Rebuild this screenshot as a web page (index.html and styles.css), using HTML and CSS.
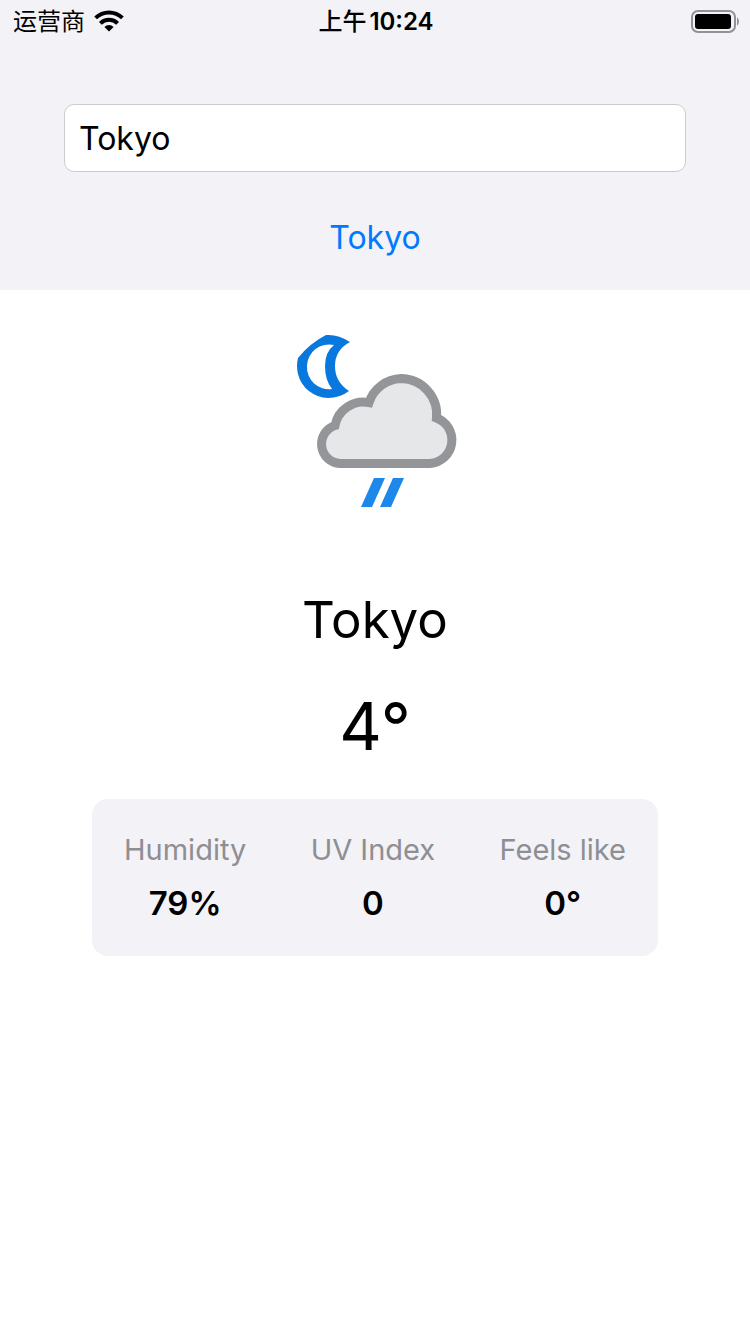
FILE: index.html
```
<!DOCTYPE html>
<html lang="en">
<head>
<meta charset="utf-8">
<meta name="viewport" content="width=device-width, initial-scale=1">
<title>Weather</title>
<link rel="stylesheet" href="styles.css">
</head>
<body>
<header class="top">
  <div class="status">
    <div class="status-left">
      <span class="carrier">运营商</span>
      <svg class="wifi" viewBox="0 0 30 22" aria-hidden="true">
        <path d="M15 21.5l-4.6-4.6a6.8 6.8 0 0 1 9.2 0z"/>
        <path class="arc" d="M6.4 13.4a12.2 12.2 0 0 1 17.2 0M1.6 7.9a19.2 19.2 0 0 1 26.8 0"/>
      </svg>
    </div>
    <div class="time"><span class="period">上午</span><span>10:24</span></div>
    <div class="status-right">
      <svg class="battery" viewBox="0 0 48 23" aria-hidden="true">
        <rect class="shell" x="1" y="1" width="43" height="21" rx="6"/>
        <rect x="4" y="4" width="36" height="15" rx="3"/>
        <path class="cap" d="M46 7.5c2.6 1 2.6 7 0 8z"/>
      </svg>
    </div>
  </div>
  <form class="search">
    <input class="field" type="text" value="Tokyo" aria-label="City">
    <button class="result" type="button">Tokyo</button>
  </form>
</header>
<main class="weather">
  <svg class="condition" viewBox="-5 0 200 200" role="img" aria-label="Night rain">
    <path class="moon" d="M70 22Q58 14 46 15Q30 23 18 38Q16 46 18 54A31.5 31.5 0 0 0 48 78Q60 78 69 71Q55 62 55 46T70 22ZM54 25A22 22 0 0 0 27 46A22 22 0 0 0 52 69Q45 60 45 46T54 25Z"/>
    <path class="cloud" d="M60 143.5A19.5 19.5 0 0 1 55 105.500A29 29 0 0 1 89 82.500A35 35 0 0 1 121 58.500A36 36 0 0 1 156.500 98A23.500 23.500 0 0 1 150 143.500Z"/>
    <path class="rain" d="M94 158h11l-13 29h-11zM113 158h11l-13 29h-11z"/>
  </svg>
  <h1 class="city">Tokyo</h1>
  <p class="temp">4°</p>
  <dl class="stats">
    <div class="stat"><dt>Humidity</dt><dd>79%</dd></div>
    <div class="stat"><dt>UV Index</dt><dd>0</dd></div>
    <div class="stat"><dt>Feels like</dt><dd>0°</dd></div>
  </dl>
</main>
</body>
</html>
```
FILE: styles.css
```
* { box-sizing: border-box; margin: 0; }
body { background: #fff; color: #000; font-family: Inter, "Noto Sans CJK SC", sans-serif; }
.top { background: #f2f2f7; padding-bottom: 31px; }
.status { display: grid; grid-template-columns: 1fr auto 1fr; align-items: center; height: 40px; padding: 0 11px 0 13px; font-size: 24px; line-height: 40px; }
.status-left { display: flex; align-items: center; gap: 9px; }
.status-right { display: flex; justify-content: flex-end; }
.time { display: flex; gap: 3px; padding-top: 2px; font-weight: 600; }
.period { font-weight: 500; }
.carrier { padding-top: 2px; font-size: 24px; }
.wifi { width: 30px; height: 22px; }
.arc { fill: none; stroke: #000; stroke-width: 4; }
.battery { width: 48px; height: 23px; }
.shell { fill: none; stroke: #929296; stroke-width: 2; }
.cap { fill: #929296; }
.search { display: flex; flex-direction: column; align-items: center; gap: 45px; padding: 64px 64px 0; }
.field { width: 100%; height: 68px; padding: 0 14px; border: 1px solid #ccc; border-radius: 10px; background: #fff; color: #000; font: inherit; font-size: 32px; }
.result { border: 0; padding: 0; background: none; color: #007aff; font: inherit; font-size: 32px; line-height: 42px; }
.weather { display: flex; flex-direction: column; align-items: center; padding: 30px 92px; }
.condition { width: 200px; height: 200px; }
.moon { fill: #0878df; fill-rule: evenodd; }
.cloud { fill: #e6e7e9; stroke: #939598; stroke-width: 9; }
.rain { fill: #1e88ea; }
.city { margin-top: 68px; font-size: 51px; font-weight: 400; line-height: 64px; }
.temp { margin-top: 34px; font-size: 66px; line-height: 80px; }
.stats { display: flex; justify-content: space-between; width: 100%; margin-top: 33px; padding: 32px 32px 33px; border-radius: 16px; background: #f2f2f7; text-align: center; }
.stat { display: flex; flex-direction: column; gap: 14px; }
.stat dt { color: #8e8e93; font-size: 29px; line-height: 38px; }
.stat dd { font-size: 33px; font-weight: 600; line-height: 40px; }
```
